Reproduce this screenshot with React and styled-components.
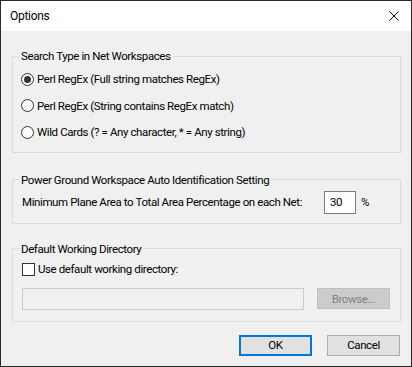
import React from "react";
import styled, { createGlobalStyle } from "styled-components";

const GlobalStyle = createGlobalStyle`
  html, body {
    margin: 0;
    padding: 0;
    background: #fff;
  }
  body {
    font-family: "Segoe UI", Roboto, "Liberation Sans", sans-serif;
    font-size: 11.5px;
    letter-spacing: -0.4px;
    color: #000;
  }
  * {
    box-sizing: border-box;
  }
`;

const Window = styled.div`
  width: 412px;
  height: 367px;
  border: 1px solid #2a2a2a;
  background: #f0f0f0;
  display: flex;
  flex-direction: column;
`;

const TitleBar = styled.div`
  height: 30px;
  background: #fff;
  display: flex;
  align-items: center;
  justify-content: space-between;
  padding: 0 12px 0 9px;
  font-size: 12px;
  letter-spacing: -0.3px;
`;

const CloseButton = styled.div`
  width: 10px;
  height: 10px;
  display: flex;
`;

const Body = styled.div`
  flex: 1;
  padding: 17px 10px 0 11px;
  display: flex;
  flex-direction: column;
`;

const Group = styled.fieldset`
  margin: ${(p) => p.$top || 0}px 0 0 0;
  padding: ${(p) => p.$pad || "0 8px 0 9px"};
  border: 1px solid #dcdcdc;
  min-width: 0;
`;

const Legend = styled.legend`
  padding: 0 2px 0 1px;
  margin-left: -2px;
  line-height: 16px;
`;

const RadioRow = styled.label`
  display: flex;
  align-items: center;
  height: 26.5px;
  gap: 3px;
  white-space: nowrap;
`;

const RadioDot = styled.span`
  width: 13px;
  height: 13px;
  border-radius: 50%;
  border: 1px solid #333;
  background: #fff;
  display: flex;
  align-items: center;
  justify-content: center;
  margin-left: -1px;

  &::after {
    content: "";
    width: 7px;
    height: 7px;
    border-radius: 50%;
    background: ${(p) => (p.$checked ? "#333" : "transparent")};
  }
`;

const FieldRow = styled.div`
  display: flex;
  align-items: center;
`;

const FieldLabel = styled.span`
  width: 302px;
  flex-shrink: 0;
  white-space: nowrap;
`;

const NumberBox = styled.div`
  width: 32px;
  height: 23px;
  border: 1px solid #7a7a7a;
  background: #fff;
  padding-left: 5px;
  display: flex;
  align-items: center;
`;

const Unit = styled.span`
  margin-left: 5px;
`;

const CheckRow = styled.label`
  display: flex;
  align-items: center;
  height: 13px;
  gap: 3px;
`;

const CheckBox = styled.span`
  width: 13px;
  height: 13px;
  border: 1px solid #333;
  background: #fff;
`;

const PathRow = styled.div`
  display: flex;
  align-items: center;
  gap: 13px;
  margin-top: 12px;
`;

const PathInput = styled.div`
  width: 282px;
  height: 22px;
  border: 1px solid #cccccc;
  background: #f0f0f0;
`;

const Button = styled.div`
  width: 73px;
  height: 21px;
  display: flex;
  align-items: center;
  justify-content: center;
  background: ${(p) => (p.$disabled ? "#cccccc" : "#e1e1e1")};
  color: ${(p) => (p.$disabled ? "#838383" : "#000")};
  border: ${(p) =>
    p.$default
      ? "2px solid #0078d7"
      : p.$disabled
      ? "1px solid #bfbfbf"
      : "1px solid #adadad"};
`;

const ButtonRow = styled.div`
  display: flex;
  justify-content: flex-end;
  gap: 15px;
  margin-top: 13px;
  padding-right: 1px;
`;

export default function App() {
  return (
    <>
      <GlobalStyle />
      <Window>
        <TitleBar>
          <span>Options</span>
          <CloseButton>
            <svg width="10" height="10" viewBox="0 0 10 10">
              <path d="M0.5 0.5 L9.5 9.5 M9.5 0.5 L0.5 9.5" stroke="#000" strokeWidth="1" fill="none" />
            </svg>
          </CloseButton>
        </TitleBar>
        <Body>
          <Group $pad="2px 8px 6px 9px">
            <Legend>Search Type in Net Workspaces</Legend>
            <RadioRow>
              <RadioDot $checked />
              Perl RegEx (Full string matches RegEx)
            </RadioRow>
            <RadioRow>
              <RadioDot />
              Perl RegEx (String contains RegEx match)
            </RadioRow>
            <RadioRow>
              <RadioDot />
              Wild Cards (? = Any character, * = Any string)
            </RadioRow>
          </Group>

          <Group $top={19} $pad="3px 8px 9px 9px">
            <Legend>Power Ground Workspace Auto Identification Setting</Legend>
            <FieldRow>
              <FieldLabel>Minimum Plane Area to Total Area Percentage on each Net:</FieldLabel>
              <NumberBox>30</NumberBox>
              <Unit>%</Unit>
            </FieldRow>
          </Group>

          <Group $top={17} $pad="6px 8px 11px 9px">
            <Legend>Default Working Directory</Legend>
            <CheckRow>
              <CheckBox />
              Use default working directory:
            </CheckRow>
            <PathRow>
              <PathInput />
              <Button $disabled>Browse...</Button>
            </PathRow>
          </Group>

          <ButtonRow>
            <Button $default>OK</Button>
            <Button>Cancel</Button>
          </ButtonRow>
        </Body>
      </Window>
    </>
  );
}
